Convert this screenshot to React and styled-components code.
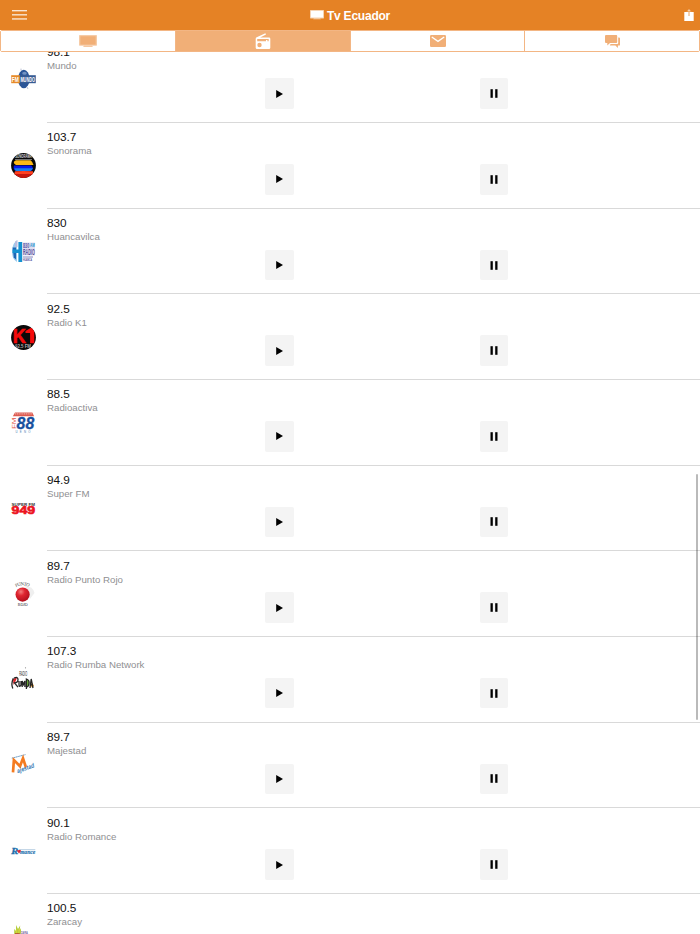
import React, { useState } from 'react'
import styled, { createGlobalStyle } from 'styled-components'

const GlobalStyle = createGlobalStyle`
    * {
        box-sizing: border-box;
    }
    body {
        margin: 0;
        background: #fff;
        font-family: "Liberation Sans", Arial, sans-serif;
        overflow: hidden;
    }
    svg {
        display: block;
        overflow: visible;
    }
`

const Screen = styled.div`
    position: relative;
    display: flex;
    flex-direction: column;
    width: 700px;
    height: 934px;
    overflow: hidden;
    background: #fff;
`

const Header = styled.header`
    display: grid;
    grid-template-columns: 60px 1fr 60px;
    align-items: center;
    flex: none;
    height: 30px;
    background: #e58225;
    color: #fff;
`

const HeaderButton = styled.button`
    display: flex;
    justify-content: ${({ $end }) => ($end ? 'flex-end' : 'flex-start')};
    padding: ${({ $end }) => ($end ? '0 6px 0 0' : '0 0 0 12px')};
    border: none;
    background: none;
    color: inherit;
`

const Title = styled.h1`
    display: flex;
    justify-content: center;
    align-items: center;
    gap: 3px;
    margin: 0;
    font-size: 12px;
    line-height: 14px;
    letter-spacing: -0.22px;
    font-weight: bold;
    span {
        padding-top: 1px;
    }
`

const Tabs = styled.nav`
    display: grid;
    grid-template-columns: 174px 175px 174px 175px;
    flex: none;
    height: 22px;
    border: 1px solid #f3b684;
    border-radius: 2px;
    background: #fff;
`

const Tab = styled.button`
    display: flex;
    justify-content: center;
    align-items: center;
    padding: 0;
    border: none;
    border-left: ${({ $first }) => ($first ? 'none' : '1px solid #f3b684')};
    background: ${({ $active }) => ($active ? '#f1af77' : '#fff')};
    color: ${({ $active }) => ($active ? '#fff' : '#f1af77')};
`

const List = styled.main`
    flex: 1;
    min-height: 0;
    overflow: hidden;
`

// the list is scrolled a little into its first row
const Rows = styled.div`
    margin-top: -14.5px;
`

const Row = styled.section`
    display: flex;
    height: 85.65px;
`

const LogoCell = styled.div`
    display: flex;
    justify-content: center;
    align-items: center;
    width: 47px;
    flex: none;
`

const Info = styled.div`
    flex: 1;
    padding-top: 7.3px;
    border-bottom: 1px solid #d9d9d9;
`

const Frequency = styled.h2`
    margin: 0;
    font-size: 11.8px;
    line-height: 14px;
    letter-spacing: -0.08px;
    font-weight: normal;
    color: #111;
`

const Name = styled.p`
    margin: 0;
    font-size: 9.7px;
    line-height: 13px;
    color: #8f8f92;
`

const Controls = styled.div`
    display: grid;
    grid-template-columns: 214.5px 1fr;
    padding: 6.7px 0 0 218.3px;
`

const ControlButton = styled.button`
    display: flex;
    justify-content: center;
    align-items: center;
    width: 28.4px;
    height: 30.5px;
    padding: 0;
    border: none;
    border-radius: 2px;
    background: #f4f4f4;
    color: #000;
`

const ScrollThumb = styled.div`
    position: absolute;
    top: 474px;
    right: 2px;
    width: 2px;
    height: 246px;
    border-radius: 1px;
    background: rgba(0, 0, 0, 0.27);
`

const MenuIcon = () => (
    <svg width="15" height="10" viewBox="0 0 15 10" fill="#fff">
        <rect y="0.2" width="15" height="1.1" />
        <rect y="4.3" width="15" height="1.1" />
        <rect y="8.4" width="15" height="1.1" />
    </svg>
)

const TvIcon = ({ width = 14 }) => (
    <svg width={width} height={width * 0.68} viewBox="0 0 18 12.2">
        <rect width="18" height="10.8" rx="0.7" fill="currentColor" opacity="0.65" />
        <rect x="1.3" y="1.2" width="15.4" height="8.4" fill="currentColor" />
        <path d="M5 10.8h8l1 1.2H4z" fill="currentColor" opacity="0.7" />
    </svg>
)

const ShareIcon = () => (
    <svg width="10" height="12" viewBox="0 0 10 12" fill="none">
        <path d="M0.3 3H9.7V12H0.3z" fill="#fff" />
        <path d="M5 7V3" stroke="#e9a261" strokeWidth="1" />
        <path d="M5 3V0.8M3.3 2.4 5 0.7l1.7 1.7" stroke="#fff" strokeOpacity="0.7" strokeWidth="0.9" />
    </svg>
)

const RadioIcon = () => (
    <svg width="16" height="16" viewBox="0 0 16 16">
        <path
            fill="currentColor"
            fillRule="evenodd"
            d="M10.4 0.2 11 1.4 5.2 4.4H14a1.3 1.3 0 0 1 1.3 1.3v9a1.3 1.3 0 0 1-1.3 1.3H2a1.3 1.3 0 0 1-1.3-1.3V5.7c0-.7.4-1.2 1-1.4zM2.2 6V8.3H11V7h1.4v1.3h1.3V6zM4.5 9.8a2.2 2.2 0 1 0 0 4.4 2.2 2.2 0 0 0 0-4.4z"
        />
    </svg>
)

const MailIcon = () => (
    <svg width="16" height="12" viewBox="0 0 16 12">
        <rect width="16" height="12" rx="1.3" fill="currentColor" />
        <path d="M1.8 2 8 6.4 14.2 2" fill="none" stroke="#fff" strokeWidth="1.3" />
    </svg>
)

const ChatIcon = () => (
    <svg width="15" height="13" viewBox="0 0 15 13" fill="currentColor">
        <path d="M1 0h10.3a.9.9 0 0 1 .9.9v6.2a.9.9 0 0 1-.9.9H5L2.3 10.6V8H1a1 1 0 0 1-1-.9V.9A1 1 0 0 1 1 0z" />
        <path d="M13.2 2.5h.8a1 1 0 0 1 1 .9v6.3a.9.9 0 0 1-.9.9h-1.2V13l-2.5-2.4H5.6a.9.9 0 0 1-.8-.7l1-.9H12.3a.9.9 0 0 0 .9-.9z" />
    </svg>
)

const PlayIcon = () => (
    <svg width="7" height="8" viewBox="0 0 7 8">
        <path d="M0.2 0 7 4 0.2 8z" fill="currentColor" />
    </svg>
)

const PauseIcon = () => (
    <svg width="8" height="9" viewBox="0 0 8 9" fill="currentColor">
        <rect x="0.5" y="0.2" width="2.3" height="8.6" />
        <rect x="5.2" y="0.2" width="2.3" height="8.6" />
    </svg>
)

const Logo = ({ children }) => (
    <svg width="25" height="25" viewBox="0 0 25 25" fontFamily="Liberation Sans, sans-serif" fontWeight="bold">
        {children}
    </svg>
)

const MundoLogo = () => (
    <Logo>
        <path d="M10 .6v2M16 19l1 2" stroke="#8b93b5" strokeWidth="0.6" />
        <ellipse cx="12.8" cy="11" rx="5.8" ry="9.2" fill="#2a5598" />
        <ellipse cx="13.5" cy="5.3" rx="2.3" ry="1.5" fill="#7393c2" />
        <rect x="0.2" y="7.2" width="8.8" height="8" fill="#e78a28" />
        <rect x="8.8" y="7.2" width="16" height="8" fill="#365b94" />
        <text x="0.8" y="13.7" fontSize="7" textLength="7" lengthAdjust="spacingAndGlyphs" fill="#fff">FM</text>
        <text x="9.4" y="13.7" fontSize="7" textLength="14.6" lengthAdjust="spacingAndGlyphs" fill="#fff">MUNDO</text>
    </Logo>
)

const SonoramaLogo = () => (
    <Logo>
        <clipPath id="sonorama"><circle cx="12.5" cy="12.5" r="12.4" /></clipPath>
        <g clipPath="url(#sonorama)">
            <rect width="25" height="25" fill="#080808" />
            <text x="4.2" y="5" fontSize="4.5" textLength="16.6" lengthAdjust="spacingAndGlyphs" fill="#ddd">SONORAMA</text>
            <path d="M4 6h17v.8H4z" fill="#999" />
            <path d="M5 7.3h14.5q2.5 1.8 3 4.7H5Q.5 9.5 5 7.3z" fill="#fdb916" />
            <path d="M3 12.4h17.5q3 3-.5 5.6H5Q1.5 16 3 12.4z" fill="#0718ec" />
            <path d="M3.5 15.2H22Q21 17 19.5 18H5q-1.6-1-1.5-2.8z" fill="#167ff0" />
            <path d="M4 18.3q8-.7 18 0v3H3z" fill="#ff4122" />
            <path d="M3 21h19v4H3z" fill="#c8170e" />
        </g>
    </Logo>
)

const HuancavilcaLogo = () => (
    <Logo>
        <path d="M6 1.5v21.5Q1 20 1 12.5 1 5 6 1.5z" fill="#9ccbee" />
        <path d="M1.6 8.5H5v12l-2.2-2z" fill="#1f67b5" />
        <path d="M4 2.5 6.5 1v7H4z" fill="#b9bedf" />
        <path d="M7.4 3h3.8v20H7.4zM1.5 10.5h7v3.4h-7z" fill="#1692d1" />
        <rect x="11.7" y="3.5" width="12.3" height="13" fill="#cfcbe8" opacity="0.65" />
        <text x="12" y="8.6" fontSize="6.4" textLength="6.2" lengthAdjust="spacingAndGlyphs" fill="#5356a4">830</text>
        <text x="19" y="8.3" fontSize="5" textLength="4.7" lengthAdjust="spacingAndGlyphs" fill="#259bd2">AM</text>
        <text x="12" y="16.4" fontSize="9" textLength="11.7" lengthAdjust="spacingAndGlyphs" fill="#555098">RADIO</text>
        <path d="M12 18h10" stroke="#6864a9" strokeWidth="0.8" />
        <text x="12" y="22.3" fontSize="4.4" textLength="9" lengthAdjust="spacingAndGlyphs" fill="#4d4b98">HUANCA</text>
    </Logo>
)

const K1Logo = () => (
    <Logo>
        <clipPath id="k1"><circle cx="12.5" cy="12.5" r="12.4" /></clipPath>
        <g clipPath="url(#k1)">
            <rect width="25" height="25" fill="#0a0909" />
            <text x="1.7" y="17.8" fontSize="20.5" textLength="13" lengthAdjust="spacingAndGlyphs" fill="#f50a0a" stroke="#f50a0a" strokeWidth="0.7">K</text>
            <path d="M14.5 6 19.5 3h3.8v15.2h-4.2V7.9h-4.6z" fill="#f50a0a" />
            <text x="4" y="22.6" fontSize="5" textLength="16" lengthAdjust="spacingAndGlyphs" fill="#aaa">92.5 FM</text>
        </g>
    </Logo>
)

const RadioactivaLogo = () => (
    <Logo>
        <path d="M4 2.4h17.3l1.8 3.9H1.8z" fill="#dd5b50" />
        <path d="M4 3.9h17" stroke="#f7d2cd" strokeWidth="0.8" strokeDasharray="1.2 0.6" />
        <text transform="translate(4.6 19) rotate(-90)" fontSize="5.2" textLength="11.5" lengthAdjust="spacingAndGlyphs" fontWeight="normal" fill="#e45043">FM</text>
        <text x="5.6" y="18.9" fontSize="16.4" fontStyle="italic" textLength="17.6" lengthAdjust="spacingAndGlyphs" fill="#17509e" stroke="#17509e" strokeWidth="0.3">88</text>
        <text x="4.4" y="22.8" fontSize="2.8" textLength="15" fontWeight="normal" fill="#4379af">UENO</text>
    </Logo>
)

const SuperFmLogo = () => (
    <Logo>
        <text x="0.6" y="9.6" fontSize="4.2" textLength="23.4" lengthAdjust="spacingAndGlyphs" fill="#333">SUPER FM</text>
        <text x="0.6" y="17.8" fontSize="10" textLength="23.4" lengthAdjust="spacingAndGlyphs" fill="#ec1220" stroke="#ec1220" strokeWidth="0.6">949</text>
    </Logo>
)

const PuntoRojoLogo = () => (
    <Logo>
        <defs>
            <radialGradient id="ball" cx="0.38" cy="0.3" r="0.7">
                <stop offset="0" stopColor="#f47c7c" />
                <stop offset="0.4" stopColor="#df2530" />
                <stop offset="1" stopColor="#b30f1d" />
            </radialGradient>
            <path id="puntoArc" d="M5 5.4Q12 1.2 18.5 5.4" />
        </defs>
        <path d="M14 4Q22 4 23.5 11L19 17z" fill="#efefef" />
        <circle cx="11.6" cy="12.6" r="7.1" fill="url(#ball)" />
        <text fontFamily="Liberation Serif, serif" fontSize="4.8" fontWeight="normal" fill="#444"><textPath href="#puntoArc" textLength="13.5">PUNTO</textPath></text>
        <text x="6.8" y="24" fontFamily="Liberation Serif, serif" fontSize="5" fontWeight="normal" textLength="9.8" lengthAdjust="spacingAndGlyphs" fill="#222">ROJO</text>
    </Logo>
)

const RumbaLogo = () => (
    <Logo>
        <circle cx="14.5" cy="0.8" r="0.6" fill="#888" />
        <text x="8.2" y="9.4" fontSize="6.4" textLength="8" lengthAdjust="spacingAndGlyphs" fontWeight="normal" fill="#222">RADIO</text>
        <path d="M2 12 6 10.5 4.5 14.5 2.5 18z" fill="#dd2428" />
        <path d="M14.8 13h3.4v6h-3z" fill="#68a838" />
        <path d="M19 18l2.5-2 1.5 3-2 1.5z" fill="#e69b30" />
        <path
            d="M2.3 11.3Q-.2 17 1.8 21.5M3 11.2q4-2 4 1.3t-3.5 3.3L7 20.2M8 14v4q.6 2.8 2 0V14M11.2 20v-6l1.3 3.5 1.4-3.5v6M15.4 22V12q3.2 1 2.6 4.5-.4 3.5-2.5 3.4M19 21l1.2-9 1.8 9M19.5 17.8h2"
            fill="none"
            stroke="#242424"
            strokeWidth="1.3"
        />
    </Logo>
)

const MajestadLogo = () => (
    <Logo>
        <path d="M.8 5.2 14.5 1.6" stroke="#4d86b7" strokeWidth="0.8" strokeDasharray="1.6 0.3" />
        <path d="M2 19.3 2.9 7 9 13.2 12 5.3 15 14.5" fill="none" stroke="#f47b20" strokeWidth="2.7" />
        <text transform="translate(6.8 20.3) rotate(-20)" fontSize="6.4" fontStyle="italic" textLength="18" lengthAdjust="spacingAndGlyphs" fill="#367bb5">ajestad</text>
    </Logo>
)

const RomanceLogo = () => (
    <Logo>
        <path d="M8.5 10h15.8v1.2H8z" fill="#c4d7e7" />
        <g fontFamily="Liberation Serif, serif" fontStyle="italic">
            <text x="0.3" y="15.4" fontSize="9" textLength="7" lengthAdjust="spacingAndGlyphs" fill="#216fac" stroke="#216fac" strokeWidth="0.3">R</text>
            <text x="9" y="15.3" fontSize="6.8" textLength="15.2" lengthAdjust="spacingAndGlyphs" fill="#2875b0" stroke="#2875b0" strokeWidth="0.2">mance</text>
        </g>
        <path d="M8 14.6 6 12q.3-1.4 1.8-.7 1.5-1.1 2.2.6z" fill="#dc2939" />
    </Logo>
)

const ZaracayLogo = () => (
    <Logo>
        <path d="M3.2 10V5l1.8 2V1l2 4 2.2-3.6-.5 5.2L10 4v6z" fill="#b6cf3d" />
        <path d="M5.3 10V5.5M7.5 10l.8-5" stroke="#e5d536" strokeWidth="0.8" />
        <path d="M4 9.3h4.7V11H4z" fill="#ad342e" />
        <text x="9.7" y="10" fontSize="4" textLength="7.3" lengthAdjust="spacingAndGlyphs" fill="#796da4">ZARA</text>
    </Logo>
)

const stations = [
    { frequency: '98.1', name: 'Mundo', Picture: MundoLogo },
    { frequency: '103.7', name: 'Sonorama', Picture: SonoramaLogo },
    { frequency: '830', name: 'Huancavilca', Picture: HuancavilcaLogo },
    { frequency: '92.5', name: 'Radio K1', Picture: K1Logo },
    { frequency: '88.5', name: 'Radioactiva', Picture: RadioactivaLogo },
    { frequency: '94.9', name: 'Super FM', Picture: SuperFmLogo },
    { frequency: '89.7', name: 'Radio Punto Rojo', Picture: PuntoRojoLogo },
    { frequency: '107.3', name: 'Radio Rumba Network', Picture: RumbaLogo },
    { frequency: '89.7', name: 'Majestad', Picture: MajestadLogo },
    { frequency: '90.1', name: 'Radio Romance', Picture: RomanceLogo },
    { frequency: '100.5', name: 'Zaracay', Picture: ZaracayLogo },
]

const tabs = [
    { id: 'tv', icon: <TvIcon width={18} /> },
    { id: 'radio', icon: <RadioIcon /> },
    { id: 'mail', icon: <MailIcon /> },
    { id: 'chat', icon: <ChatIcon /> },
]

const App = () => {
    const [activeTab, setActiveTab] = useState('radio')

    return (
        <Screen>
            <GlobalStyle />
            <Header>
                <HeaderButton><MenuIcon /></HeaderButton>
                <Title><TvIcon /><span>Tv Ecuador</span></Title>
                <HeaderButton $end><ShareIcon /></HeaderButton>
            </Header>
            <Tabs>
                {tabs.map(({ id, icon }, index) => (
                    <Tab key={id} $first={index === 0} $active={activeTab === id} onClick={() => setActiveTab(id)}>
                        {icon}
                    </Tab>
                ))}
            </Tabs>
            <List>
                <Rows>
                    {stations.map(({ frequency, name, Picture }) => (
                        <Row key={name}>
                            <LogoCell><Picture /></LogoCell>
                            <Info>
                                <Frequency>{frequency}</Frequency>
                                <Name>{name}</Name>
                                <Controls>
                                    <ControlButton><PlayIcon /></ControlButton>
                                    <ControlButton><PauseIcon /></ControlButton>
                                </Controls>
                            </Info>
                        </Row>
                    ))}
                </Rows>
            </List>
            <ScrollThumb />
        </Screen>
    )
}

export default App
